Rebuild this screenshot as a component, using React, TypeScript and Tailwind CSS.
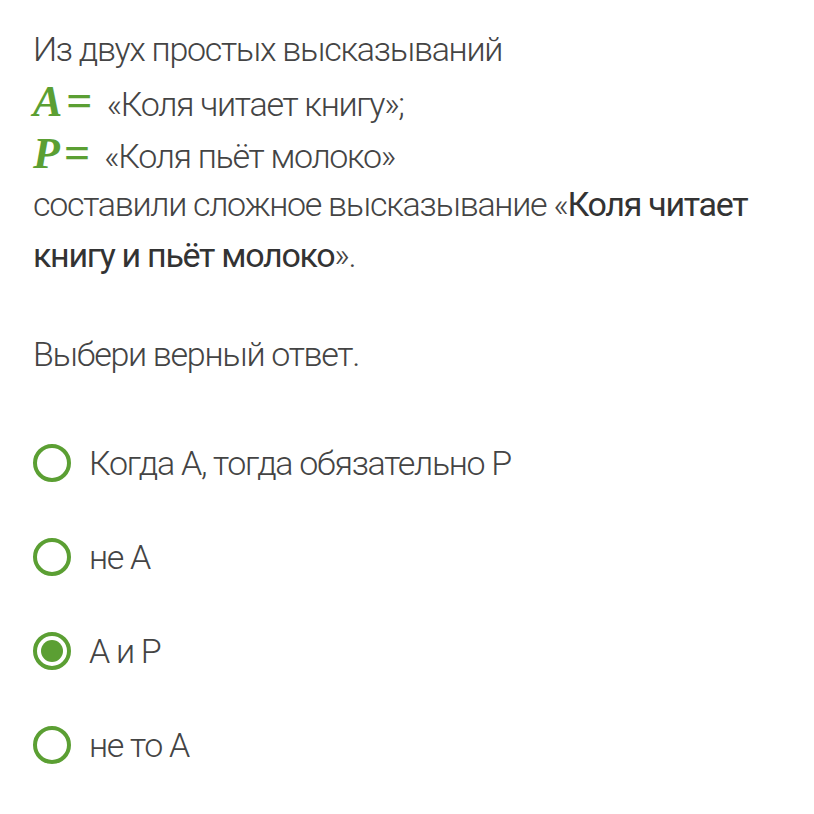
import React from "react";

const Radio = ({ checked }: { checked?: boolean }) => (
  <span className="flex h-[38px] w-[38px] shrink-0 items-center justify-center rounded-full border-[4px] border-[#5b9f33] bg-white">
    {checked && <span className="h-[22px] w-[22px] rounded-full bg-[#5b9f33]" />}
  </span>
);

const MathVar = ({ v }: { v: string }) => (
  <span className="inline-flex items-baseline pr-[14px] align-baseline font-[Liberation_Serif,serif] tracking-normal text-[#5b9f33]">
    <span className="text-[44px] font-bold italic">{v}</span>
    <span className="ml-[4px] text-[46px] font-bold">=</span>
  </span>
);

export default function App() {
  const opts = ["Когда А, тогда обязательно Р", "не А", "А и Р", "не то А"];
  return (
    <div className="min-h-[814px] w-[814px] bg-white pl-[33px] pr-[40px] pt-[24px] font-['Roboto',sans-serif] text-[34px] font-light leading-[51px] tracking-[-1.3px] text-[#444444]">
      <div>Из двух простых высказываний</div>
      <div className="h-[52px] leading-[52px]">
        <MathVar v="A" />«Коля читает книгу»;
      </div>
      <div className="h-[52px] leading-[52px]">
        <MathVar v="P" />«Коля пьёт молоко»
      </div>
      <div>
        составили сложное высказывание «<span className="font-normal text-[#333333]">Коля читает книгу и пьёт молоко</span>».
      </div>
      <div className="mt-[48px]">Выбери верный ответ.</div>
      <div className="mt-[58px] flex flex-col gap-[44px]">
        {opts.map((o, i) => (
          <div key={o} className="flex h-[50px] items-center gap-[18px]">
            <Radio checked={i === 2} />
            <span>{o}</span>
          </div>
        ))}
      </div>
    </div>
  );
}
